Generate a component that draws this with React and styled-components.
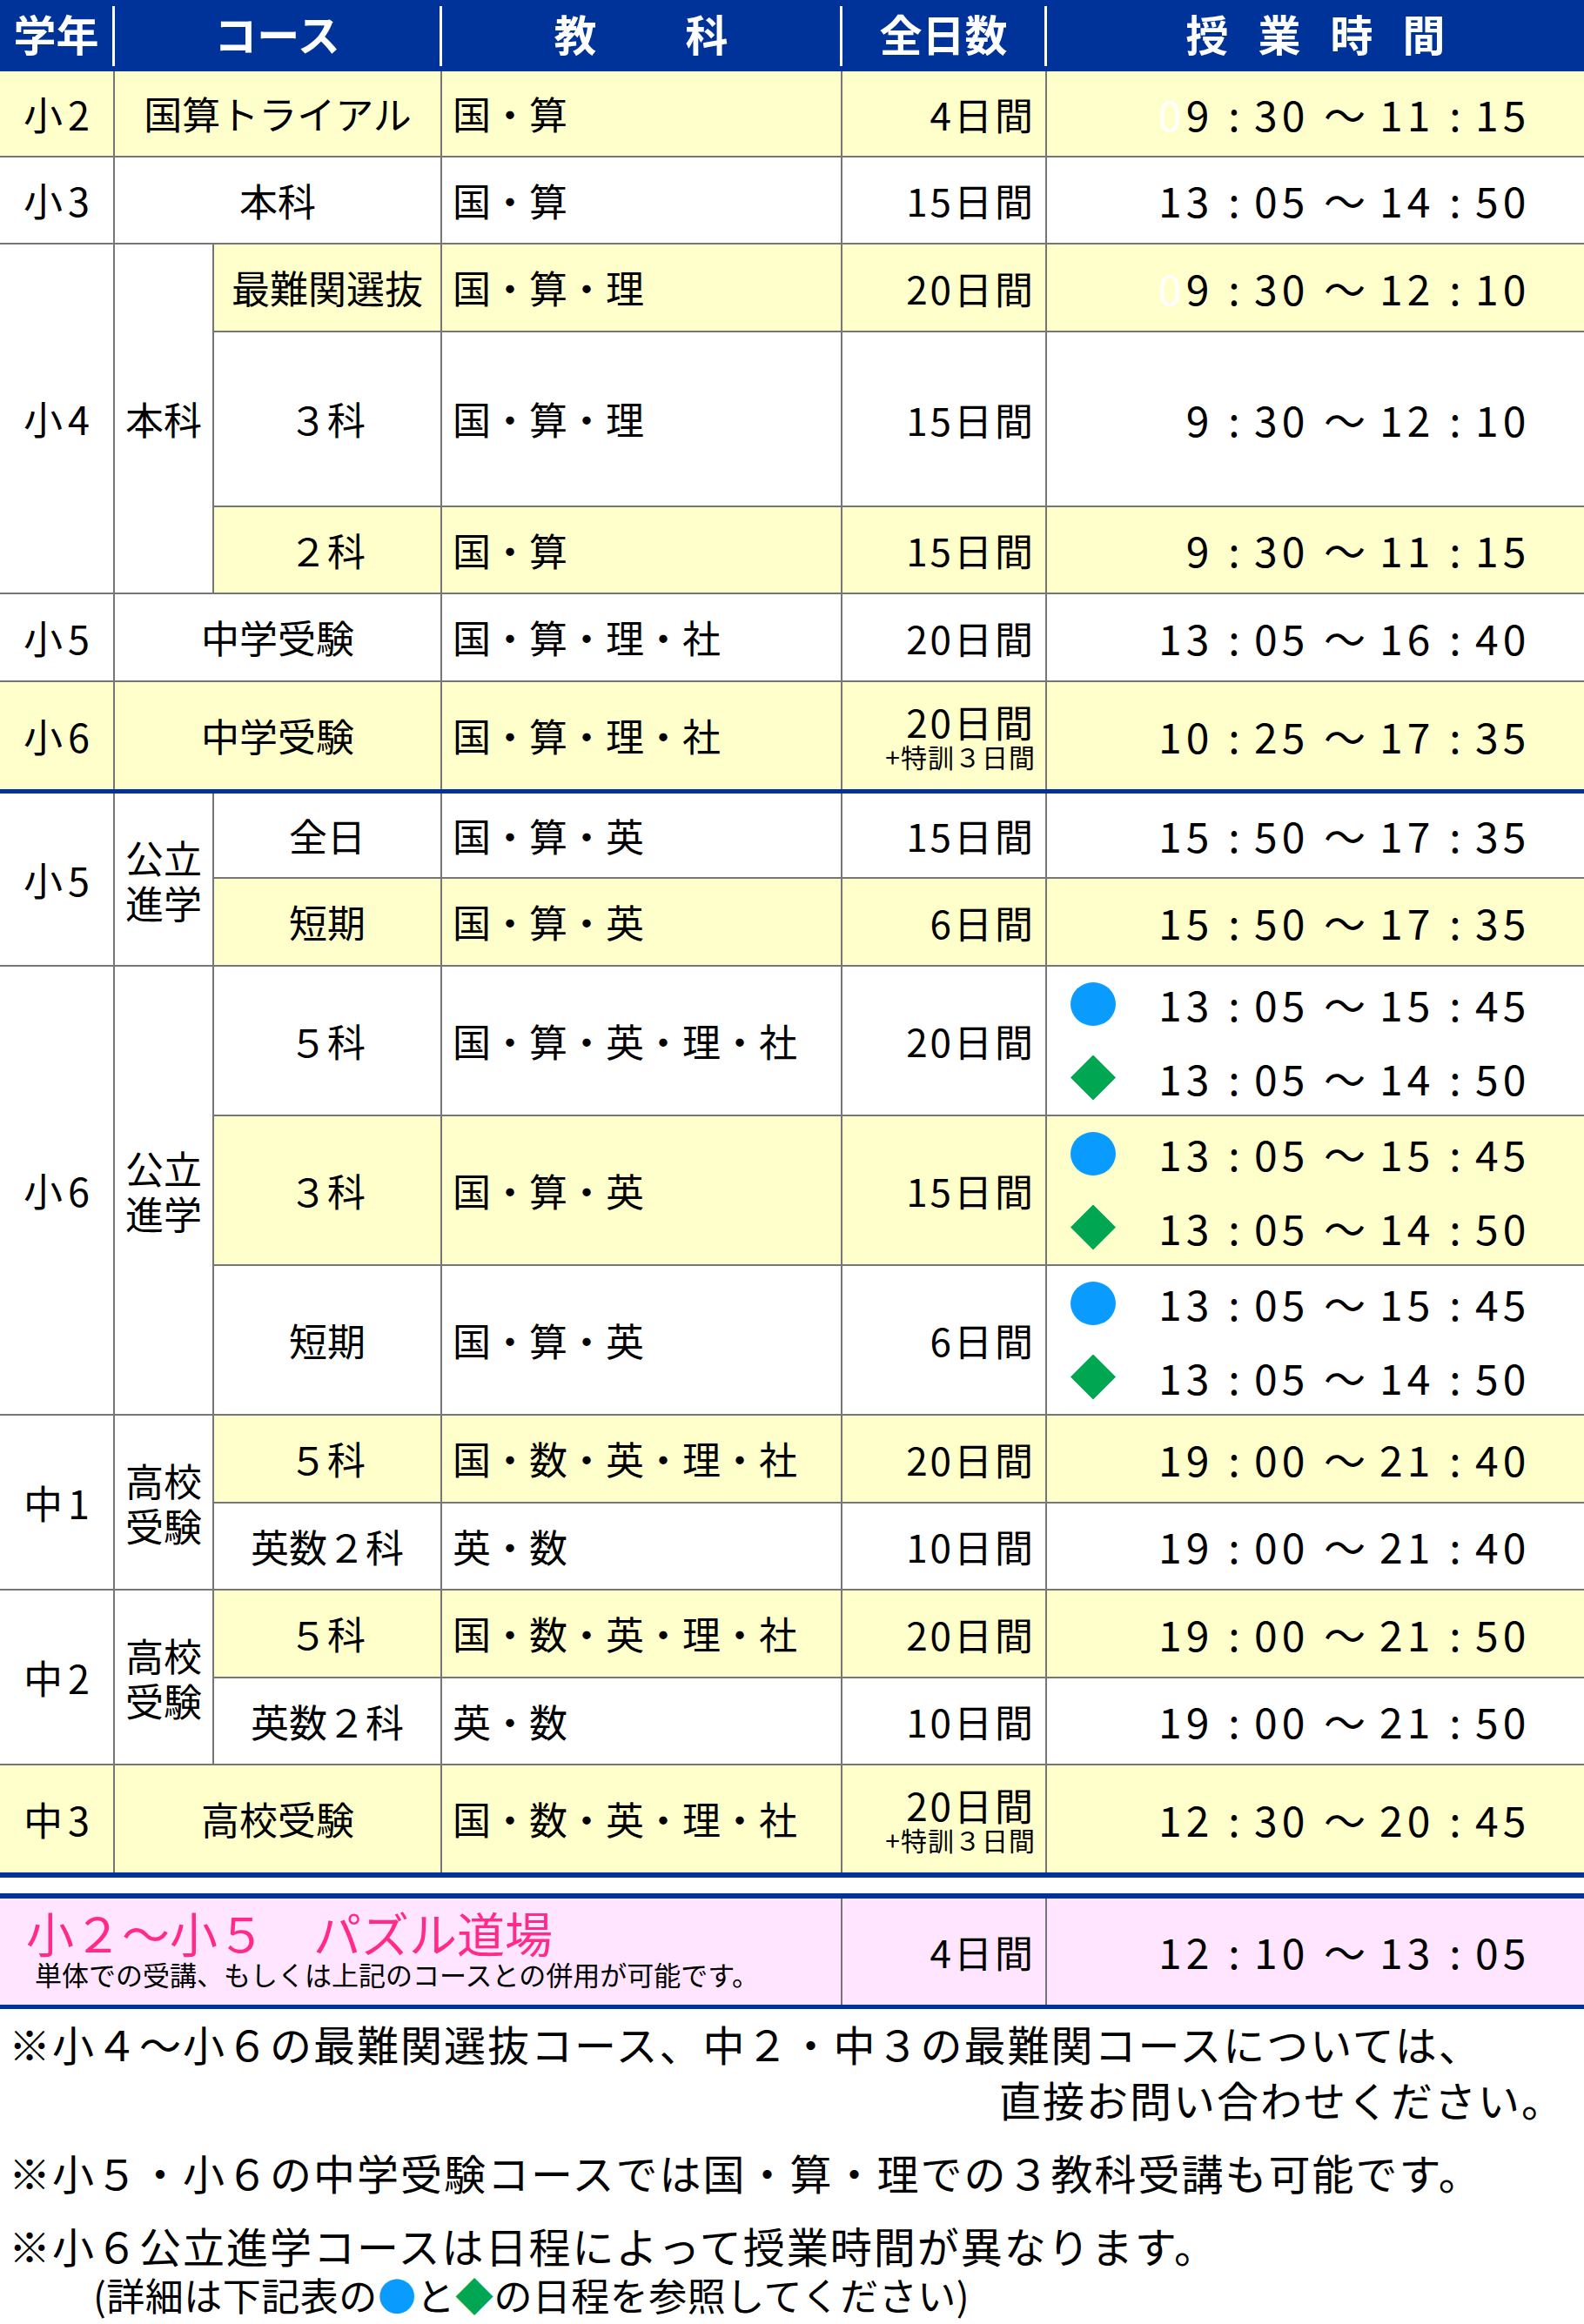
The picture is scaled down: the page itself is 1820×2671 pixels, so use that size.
import React from "react";
import styled, { createGlobalStyle } from "styled-components";

const BLUE = "#003399";
const YELLOW = "#ffffcc";
const PINK = "#ffe5ff";
const LINE = "#767676";

const GlobalStyle = createGlobalStyle`
  html, body { margin: 0; padding: 0; background: #fff; }
  body {
    font-family: "Noto Sans CJK JP", "Noto Sans", sans-serif;
    color: #000;
  }
  * { box-sizing: border-box; }
`;

const Page = styled.div`
  width: 1820px;
  height: 2671px;
  overflow: hidden;
`;

const Header = styled.div`
  display: grid;
  grid-template-columns: 132px 376px 460px 235px 617px;
  height: 82px;
  padding: 7px 0 6px;
  background: ${BLUE};
`;

const HeadCell = styled.div`
  display: flex;
  align-items: center;
  justify-content: center;
  gap: ${(p) => p.$gap || 0}px;
  padding-bottom: 8px;
  color: #fff;
  font-size: 49px;
  font-weight: 700;
  line-height: 1;
  border-right: 3px solid #fff;
  &:last-child {
    border-right: none;
  }
`;

const Table = styled.div`
  display: grid;
  grid-template-columns: 132px 114px 262px 460px 235px 617px;
  grid-template-rows:
    99px 100px 101px 201px 100px 101px 123px 5px
    98px 101px 172px 172px 172px 101px 100px 101px 100px 123px 6px;
`;

const Rule = styled.div`
  grid-column: 1 / -1;
  background: ${BLUE};
`;

const tone = (t) => (t === "y" ? YELLOW : t === "p" ? PINK : "#fff");

const Cell = styled.div`
  display: flex;
  align-items: center;
  grid-row: span ${(p) => p.$rows || 1};
  grid-column: span ${(p) => p.$cols || 1};
  background: ${(p) => tone(p.$tone)};
  border-right: 2px solid ${LINE};
  border-bottom: ${(p) => (p.$open ? "none" : `2px solid ${LINE}`)};
  font-size: 44px;
  line-height: 1.2;
  white-space: nowrap;
`;

const GradeCell = styled(Cell)`
  justify-content: center;
  padding-left: 6px;
  font-size: 45px;
  letter-spacing: 6px;
`;

const TrackCell = styled(Cell)`
  justify-content: center;
  text-align: center;
  line-height: 52px;
`;

const CourseCell = styled(Cell)`
  justify-content: center;
`;

const SubjectCell = styled(Cell)`
  padding-left: 12px;
`;

const DaysCell = styled(Cell)`
  flex-direction: column;
  align-items: flex-end;
  justify-content: center;
  padding-right: 11px;
`;

const Days = styled.span`
  letter-spacing: 3px;
  line-height: 46px;
`;

const Extra = styled.span`
  font-size: 30px;
  line-height: 34px;
  letter-spacing: 1px;
`;

const TimeCell = styled(Cell)`
  border-right: none;
  flex-direction: column;
  align-items: stretch;
  padding-left: 27px;
`;

const TimeLine = styled.div`
  flex: 1;
  display: flex;
  align-items: center;
  gap: 49px;
`;

const Marker = styled.span`
  flex: none;
  width: 52px;
  height: ${(p) => (p.$kind === "diamond" ? 52 : 50)}px;
  background: ${(p) =>
    p.$kind === "circle" ? "#0a9bff" : p.$kind === "diamond" ? "#00a651" : "transparent"};
  border-radius: ${(p) => (p.$kind === "circle" ? "50%" : "0")};
  clip-path: ${(p) =>
    p.$kind === "diamond" ? "polygon(50% 0, 100% 50%, 50% 100%, 0 50%)" : "none"};
`;

const TimeText = styled.span`
  display: flex;
  align-items: baseline;
  font-size: 48px;
  line-height: 1.2;
`;

const Num = styled.span`
  display: inline-block;
  width: 64px;
  letter-spacing: 5px;
  font-variant-numeric: tabular-nums;
  text-align: ${(p) => (p.$lead ? "right" : "left")};
`;

const Sep = styled.span`
  display: inline-block;
  width: ${(p) => p.$w}px;
  text-align: center;
`;

const Ghost = styled.span`
  color: ${(p) => (p.$show ? "#fff" : "transparent")};
`;

const Spacer = styled.div`
  height: 18px;
`;

const Puzzle = styled.div`
  display: grid;
  grid-template-columns: 968px 235px 617px;
  height: 133px;
  border-top: 6px solid ${BLUE};
  border-bottom: 5px solid ${BLUE};
  background: ${PINK};
`;

const PuzzleCell = styled(Cell)`
  flex-direction: column;
  align-items: flex-start;
  justify-content: center;
  padding: 0 0 0 30px;
`;

const PuzzleTitle = styled.div`
  color: #ff2a8a;
  font-size: 55px;
  line-height: 58px;
  margin-top: -8px;
`;

const PuzzleSub = styled.div`
  font-size: 31px;
  line-height: 36px;
  margin: 2px 0 0 10px;
`;

const Notes = styled.div`
  padding: 7px 0 0 10px;
  font-size: 48px;
  letter-spacing: 2px;
`;

const Note = styled.p`
  margin: ${(p) => (p.$first ? 0 : "20px")} 0 0;
  line-height: 64px;
  white-space: nowrap;
`;

const NoteEnd = styled.span`
  display: block;
  text-align: right;
  padding-right: 22px;
`;

const Detail = styled.p`
  margin: 0;
  padding-left: 97px;
  font-size: 44px;
  line-height: 50px;
  letter-spacing: 0.5px;
  white-space: nowrap;
`;

const Sym = styled.span`
  color: ${(p) => p.$color};
`;

// "13：05～14：50" -> digit groups with a narrow colon and a wide tilde
const Clock = ({ text, ghost }) => {
  const [from, to] = text.split("～");
  const [h1, m1] = from.split("：");
  const [h2, m2] = to.split("：");
  return (
    <TimeText>
      <Num>
        {ghost && <Ghost $show={ghost === "show"}>0</Ghost>}
        {h1}
      </Num>
      <Sep $w={46}>:</Sep>
      <Num>{m1}</Num>
      <Sep $w={80}>～</Sep>
      <Num>{h2}</Num>
      <Sep $w={46}>:</Sep>
      <Num>{m2}</Num>
    </TimeText>
  );
};

const Tail = ({ t, subj, days, extra, times, open }) => (
  <>
    <SubjectCell $tone={t} $open={open}>
      {subj}
    </SubjectCell>
    <DaysCell $tone={t} $open={open}>
      <Days>{days}</Days>
      {extra && <Extra>{extra}</Extra>}
    </DaysCell>
    <TimeCell $tone={t} $open={open}>
      {times.map((x, i) => (
        <TimeLine key={i}>
          <Marker $kind={x.mark} />
          <Clock text={x.text} ghost={x.ghost} />
        </TimeLine>
      ))}
    </TimeCell>
  </>
);

const one = (text, ghost) => [{ text, ghost }];
const pair = [
  { mark: "circle", text: "13：05～15：45" },
  { mark: "diamond", text: "13：05～14：50" },
];

export default function App() {
  return (
    <Page>
      <GlobalStyle />
      <Header>
        <HeadCell>学年</HeadCell>
        <HeadCell>コース</HeadCell>
        <HeadCell $gap={102}>
          <span>教</span>
          <span>科</span>
        </HeadCell>
        <HeadCell>全日数</HeadCell>
        <HeadCell $gap={34}>
          <span>授</span>
          <span>業</span>
          <span>時</span>
          <span>間</span>
        </HeadCell>
      </Header>

      <Table>
        {/* 小2 */}
        <GradeCell $tone="y">小2</GradeCell>
        <CourseCell $tone="y" $cols={2}>国算トライアル</CourseCell>
        <Tail t="y" subj="国・算" days="4日間" times={one("9：30～11：15", "show")} />

        {/* 小3 */}
        <GradeCell>小3</GradeCell>
        <CourseCell $cols={2}>本科</CourseCell>
        <Tail subj="国・算" days="15日間" times={one("13：05～14：50")} />

        {/* 小4 */}
        <GradeCell $rows={3}>小4</GradeCell>
        <TrackCell $rows={3}>本科</TrackCell>
        <CourseCell $tone="y">最難関選抜</CourseCell>
        <Tail t="y" subj="国・算・理" days="20日間" times={one("9：30～12：10", "show")} />
        <CourseCell>３科</CourseCell>
        <Tail subj="国・算・理" days="15日間" times={one("9：30～12：10", "hide")} />
        <CourseCell $tone="y">２科</CourseCell>
        <Tail t="y" subj="国・算" days="15日間" times={one("9：30～11：15", "hide")} />

        {/* 小5 中学受験 */}
        <GradeCell>小5</GradeCell>
        <CourseCell $cols={2}>中学受験</CourseCell>
        <Tail subj="国・算・理・社" days="20日間" times={one("13：05～16：40")} />

        {/* 小6 中学受験 */}
        <GradeCell $tone="y" $open>小6</GradeCell>
        <CourseCell $tone="y" $cols={2} $open>中学受験</CourseCell>
        <Tail t="y" open subj="国・算・理・社" days="20日間" extra="+特訓３日間" times={one("10：25～17：35")} />

        <Rule />

        {/* 小5 公立進学 */}
        <GradeCell $rows={2}>小5</GradeCell>
        <TrackCell $rows={2}>公立<br />進学</TrackCell>
        <CourseCell>全日</CourseCell>
        <Tail subj="国・算・英" days="15日間" times={one("15：50～17：35")} />
        <CourseCell $tone="y">短期</CourseCell>
        <Tail t="y" subj="国・算・英" days="6日間" times={one("15：50～17：35")} />

        {/* 小6 公立進学 */}
        <GradeCell $rows={3}>小6</GradeCell>
        <TrackCell $rows={3}>公立<br />進学</TrackCell>
        <CourseCell>５科</CourseCell>
        <Tail subj="国・算・英・理・社" days="20日間" times={pair} />
        <CourseCell $tone="y">３科</CourseCell>
        <Tail t="y" subj="国・算・英" days="15日間" times={pair} />
        <CourseCell>短期</CourseCell>
        <Tail subj="国・算・英" days="6日間" times={pair} />

        {/* 中1 */}
        <GradeCell $rows={2}>中1</GradeCell>
        <TrackCell $rows={2}>高校<br />受験</TrackCell>
        <CourseCell $tone="y">５科</CourseCell>
        <Tail t="y" subj="国・数・英・理・社" days="20日間" times={one("19：00～21：40")} />
        <CourseCell>英数２科</CourseCell>
        <Tail subj="英・数" days="10日間" times={one("19：00～21：40")} />

        {/* 中2 */}
        <GradeCell $rows={2}>中2</GradeCell>
        <TrackCell $rows={2}>高校<br />受験</TrackCell>
        <CourseCell $tone="y">５科</CourseCell>
        <Tail t="y" subj="国・数・英・理・社" days="20日間" times={one("19：00～21：50")} />
        <CourseCell>英数２科</CourseCell>
        <Tail subj="英・数" days="10日間" times={one("19：00～21：50")} />

        {/* 中3 */}
        <GradeCell $tone="y" $open>中3</GradeCell>
        <CourseCell $tone="y" $cols={2} $open>高校受験</CourseCell>
        <Tail t="y" open subj="国・数・英・理・社" days="20日間" extra="+特訓３日間" times={one("12：30～20：45")} />

        <Rule />
      </Table>

      <Spacer />

      <Puzzle>
        <PuzzleCell $tone="p" $open>
          <PuzzleTitle>小２～小５　パズル道場</PuzzleTitle>
          <PuzzleSub>単体での受講、もしくは上記のコースとの併用が可能です。</PuzzleSub>
        </PuzzleCell>
        <DaysCell $tone="p" $open>
          <Days>4日間</Days>
        </DaysCell>
        <TimeCell $tone="p" $open>
          <TimeLine>
            <Marker />
            <Clock text="12：10～13：05" />
          </TimeLine>
        </TimeCell>
      </Puzzle>

      <Notes>
        <Note $first>
          ※小４～小６の最難関選抜コース、中２・中３の最難関コースについては、
          <NoteEnd>直接お問い合わせください。</NoteEnd>
        </Note>
        <Note>※小５・小６の中学受験コースでは国・算・理での３教科受講も可能です。</Note>
        <Note>※小６公立進学コースは日程によって授業時間が異なります。</Note>
        <Detail>
          (詳細は下記表の<Sym $color="#0a9bff">●</Sym>と<Sym $color="#00a651">◆</Sym>の日程を参照してください)
        </Detail>
      </Notes>
    </Page>
  );
}
